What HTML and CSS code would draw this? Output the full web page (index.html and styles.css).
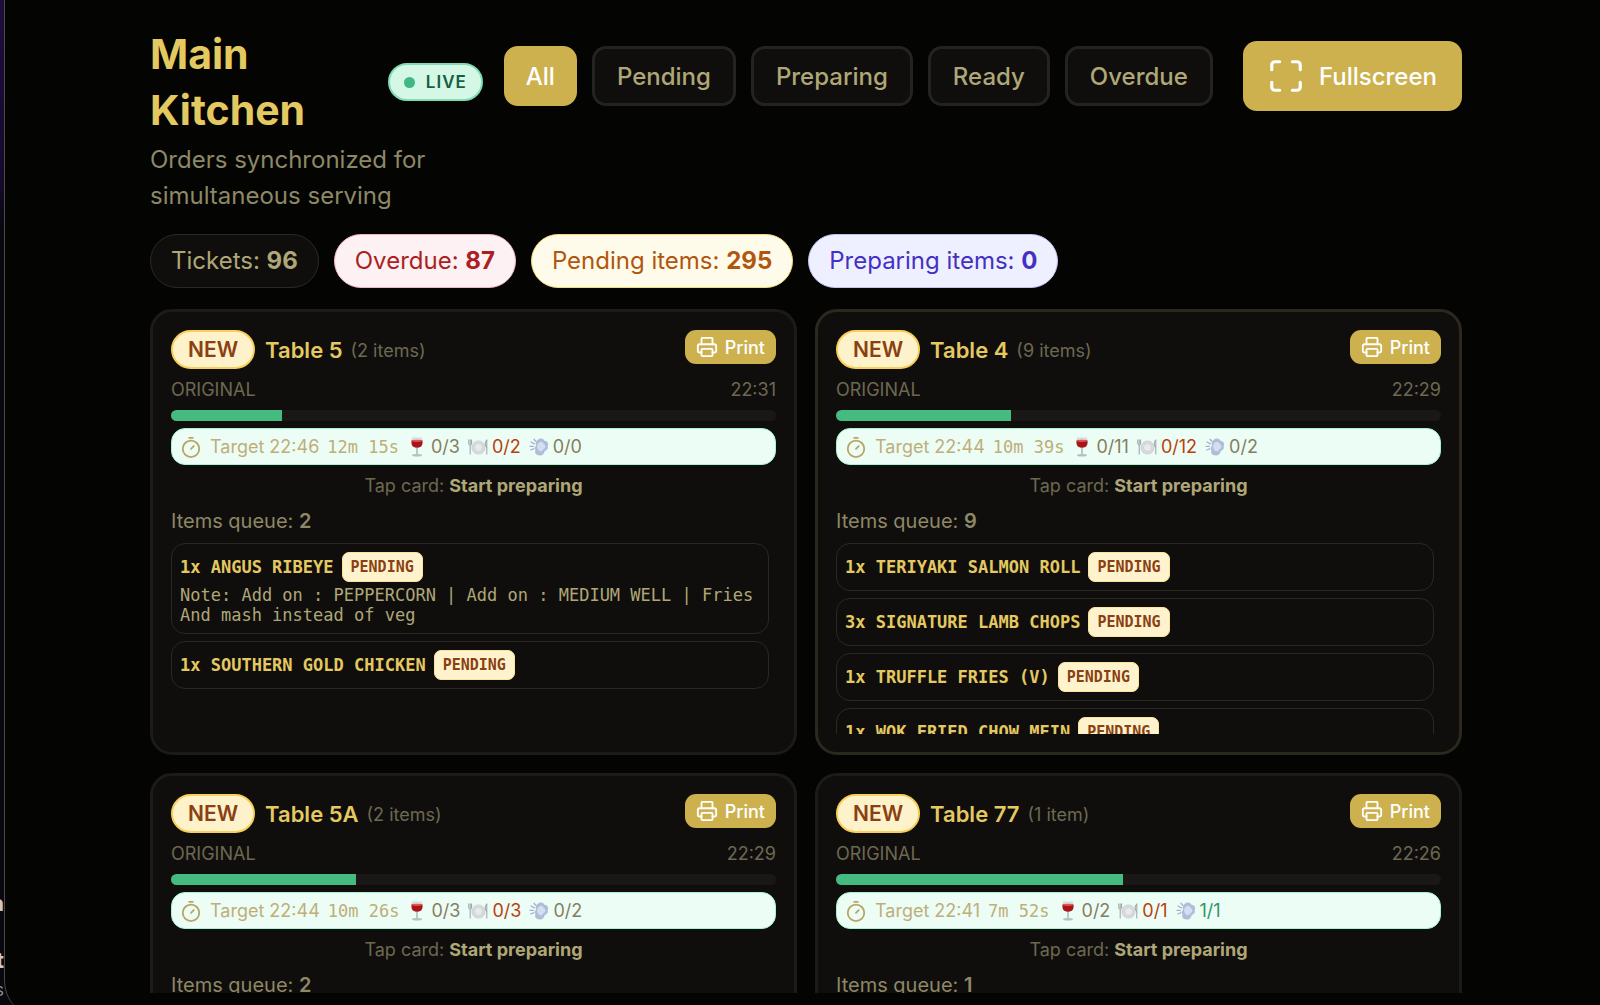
FILE: index.html
```html
<!DOCTYPE html>
<html lang="en">
<head>
  <meta charset="UTF-8">
  <meta name="viewport" content="width=device-width, initial-scale=1.0">
  <title>Main Kitchen | Order display</title>
  <link rel="stylesheet" href="styles.css">
</head>
<body>
  <!-- Shared icons -->
  <svg class="sprite" aria-hidden="true">
    <symbol id="icon-expand" viewBox="0 0 24 24">
      <path d="M8 3H5a2 2 0 0 0-2 2v3M21 8V5a2 2 0 0 0-2-2h-3M3 16v3a2 2 0 0 0 2 2h3M16 21h3a2 2 0 0 0 2-2v-3"/>
    </symbol>
    <symbol id="icon-print" viewBox="0 0 24 24">
      <path d="M6 18H4a2 2 0 0 1-2-2v-5a2 2 0 0 1 2-2h16a2 2 0 0 1 2 2v5a2 2 0 0 1-2 2h-2"/>
      <path d="M6 9V3a1 1 0 0 1 1-1h10a1 1 0 0 1 1 1v6"/>
      <rect x="6" y="14" width="12" height="8" rx="1"/>
    </symbol>
    <symbol id="icon-timer" viewBox="0 0 24 24">
      <path d="M10 2h4M12 14l3-3"/>
      <circle cx="12" cy="14" r="9"/>
    </symbol>
    <symbol id="icon-wine" viewBox="0 0 20 20">
      <path d="M5 .5h10c.8 5 1 10-5 10.500C4 10.500 4.200 5.500 5 .5z" fill="#d3dcdd"/>
      <path d="M4.600 3.500h10.800c.6 4-.4 7-5.400 7.300-5-.3-6-3.300-5.400-7.300z" fill="#a8141a"/>
      <ellipse cx="10" cy="3.800" rx="5.400" ry="1.100" fill="#e2564e"/>
      <path d="M9.400 11h1.200v7H9.400z" fill="#9aa7ab"/>
      <ellipse cx="10" cy="18.300" rx="5" ry="1.200" fill="#b4c0c3"/>
    </symbol>
    <symbol id="icon-plate" viewBox="0 0 20 20">
      <circle cx="10.500" cy="10.500" r="6.600" fill="#d9dcde" stroke="#bfc4c7" stroke-width=".6"/>
      <circle cx="10.500" cy="10.500" r="4" fill="#e8eaeb" stroke="#c3c8cb" stroke-width=".6"/>
      <path d="M.8 2.500v4.500M2.200 2.500v4.500M3.600 2.500v4.500M.8 7c0 1.500 2.800 1.500 2.800 0M2.200 8v9.500M18.800 2.500v15M18.600 3c-1.800 2-1.800 5.500 0 7.500" fill="none" stroke="#98a1a6" stroke-width="1"/>
    </symbol>
    <symbol id="icon-dash" viewBox="0 0 20 20">
      <path d="M8.500 3c2-2.500 6-2 7 .8 3 .2 4.500 3 3.200 5.500.6 2.800-1.200 4.500-3 4.700-.5 3.500-3.500 5.500-6.200 4.200-2.700-.2-4-2.500-3-4.700-1.500-1.500-1.200-3.700.7-4.500C6.200 6.800 6.800 4.300 8.500 3z" fill="#aebdd8"/>
      <path d="M10 5.500c2-1.800 4.700-.5 4.700 1.700 2.300.6 2.300 4 0 4.600-.8 2.700-4.200 3.400-5.200 1.200C7.500 11 8 7 10 5.500z" fill="#d5def0"/>
      <path d="M2 5l3.500 1.800M1 9.300h3.500M1.800 13l2.700-1.200M5 2.200l1.800 2" stroke="#9fb3d3" stroke-width="1.300" stroke-linecap="round" fill="none"/>
    </symbol>
  </svg>

  <div class="desktop" aria-hidden="true">
    <span class="peek peek-bold">a</span>
    <span class="peek peek-bold">t</span>
    <span class="peek">s</span>
  </div>

  <div class="window">
    <main class="kitchen">
      <header class="header">
        <div class="heading">
          <div class="heading-row">
            <h1>Main Kitchen</h1>
            <span class="live"><span class="live-dot"></span>LIVE</span>
          </div>
          <p>Orders synchronized for simultaneous serving</p>
        </div>
        <div class="actions">
          <nav class="filters">
            <button type="button" class="filter active">All</button>
            <button type="button" class="filter">Pending</button>
            <button type="button" class="filter">Preparing</button>
            <button type="button" class="filter">Ready</button>
            <button type="button" class="filter">Overdue</button>
          </nav>
          <button type="button" class="fullscreen">
            <svg class="line-icon"><use href="#icon-expand"/></svg>
            Fullscreen
          </button>
        </div>
      </header>

      <div class="stats">
        <span class="stat">Tickets: <b>96</b></span>
        <span class="stat stat-overdue">Overdue: <b>87</b></span>
        <span class="stat stat-pending">Pending items: <b>295</b></span>
        <span class="stat stat-preparing">Preparing items: <b>0</b></span>
      </div>

      <section class="tickets">
        <article class="ticket">
          <div class="ticket-head">
            <span class="badge-new">NEW</span>
            <h2>Table 5</h2>
            <span class="count">(2 items)</span>
            <button type="button" class="print"><svg class="line-icon"><use href="#icon-print"/></svg>Print</button>
          </div>
          <div class="ticket-meta"><span>ORIGINAL</span><time>22:31</time></div>
          <div class="progress"><div class="progress-fill" style="width: 18.3%"></div></div>
          <div class="target">
            <svg class="line-icon"><use href="#icon-timer"/></svg>
            <span class="target-time">Target 22:46</span>
            <span class="countdown">12m 15s</span>
            <span class="tally"><svg><use href="#icon-wine"/></svg>0/3</span>
            <span class="tally late"><svg><use href="#icon-plate"/></svg>0/2</span>
            <span class="tally"><svg><use href="#icon-dash"/></svg>0/0</span>
          </div>
          <p class="hint">Tap card: <b>Start preparing</b></p>
          <p class="queue">Items queue: <b>2</b></p>
          <ul class="items">
            <li>
              <div class="item-row"><span class="item-name">1x ANGUS RIBEYE</span><span class="status">PENDING</span></div>
              <p class="note">Note: Add on : PEPPERCORN | Add on : MEDIUM WELL | Fries And mash instead of veg</p>
            </li>
            <li>
              <div class="item-row"><span class="item-name">1x SOUTHERN GOLD CHICKEN</span><span class="status">PENDING</span></div>
            </li>
          </ul>
        </article>

        <article class="ticket selected">
          <div class="ticket-head">
            <span class="badge-new">NEW</span>
            <h2>Table 4</h2>
            <span class="count">(9 items)</span>
            <button type="button" class="print"><svg class="line-icon"><use href="#icon-print"/></svg>Print</button>
          </div>
          <div class="ticket-meta"><span>ORIGINAL</span><time>22:29</time></div>
          <div class="progress"><div class="progress-fill" style="width: 29%"></div></div>
          <div class="target">
            <svg class="line-icon"><use href="#icon-timer"/></svg>
            <span class="target-time">Target 22:44</span>
            <span class="countdown">10m 39s</span>
            <span class="tally"><svg><use href="#icon-wine"/></svg>0/11</span>
            <span class="tally late"><svg><use href="#icon-plate"/></svg>0/12</span>
            <span class="tally"><svg><use href="#icon-dash"/></svg>0/2</span>
          </div>
          <p class="hint">Tap card: <b>Start preparing</b></p>
          <p class="queue">Items queue: <b>9</b></p>
          <ul class="items">
            <li>
              <div class="item-row"><span class="item-name">1x TERIYAKI SALMON ROLL</span><span class="status">PENDING</span></div>
            </li>
            <li>
              <div class="item-row"><span class="item-name">3x SIGNATURE LAMB CHOPS</span><span class="status">PENDING</span></div>
            </li>
            <li>
              <div class="item-row"><span class="item-name">1x TRUFFLE FRIES (V)</span><span class="status">PENDING</span></div>
            </li>
            <li>
              <div class="item-row"><span class="item-name">1x WOK FRIED CHOW MEIN</span><span class="status">PENDING</span></div>
            </li>
          </ul>
        </article>

        <article class="ticket">
          <div class="ticket-head">
            <span class="badge-new">NEW</span>
            <h2>Table 5A</h2>
            <span class="count">(2 items)</span>
            <button type="button" class="print"><svg class="line-icon"><use href="#icon-print"/></svg>Print</button>
          </div>
          <div class="ticket-meta"><span>ORIGINAL</span><time>22:29</time></div>
          <div class="progress"><div class="progress-fill" style="width: 30.5%"></div></div>
          <div class="target">
            <svg class="line-icon"><use href="#icon-timer"/></svg>
            <span class="target-time">Target 22:44</span>
            <span class="countdown">10m 26s</span>
            <span class="tally"><svg><use href="#icon-wine"/></svg>0/3</span>
            <span class="tally late"><svg><use href="#icon-plate"/></svg>0/3</span>
            <span class="tally"><svg><use href="#icon-dash"/></svg>0/2</span>
          </div>
          <p class="hint">Tap card: <b>Start preparing</b></p>
          <p class="queue">Items queue: <b>2</b></p>
          <ul class="items"></ul>
        </article>

        <article class="ticket">
          <div class="ticket-head">
            <span class="badge-new">NEW</span>
            <h2>Table 77</h2>
            <span class="count">(1 item)</span>
            <button type="button" class="print"><svg class="line-icon"><use href="#icon-print"/></svg>Print</button>
          </div>
          <div class="ticket-meta"><span>ORIGINAL</span><time>22:26</time></div>
          <div class="progress"><div class="progress-fill" style="width: 47.5%"></div></div>
          <div class="target">
            <svg class="line-icon"><use href="#icon-timer"/></svg>
            <span class="target-time">Target 22:41</span>
            <span class="countdown">7m 52s</span>
            <span class="tally"><svg><use href="#icon-wine"/></svg>0/2</span>
            <span class="tally late"><svg><use href="#icon-plate"/></svg>0/1</span>
            <span class="tally done"><svg><use href="#icon-dash"/></svg>1/1</span>
          </div>
          <p class="hint">Tap card: <b>Start preparing</b></p>
          <p class="queue">Items queue: <b>1</b></p>
          <ul class="items"></ul>
        </article>
      </section>
    </main>
  </div>
</body>
</html>
```

FILE: styles.css
```css
* {
  margin: 0;
  padding: 0;
  box-sizing: border-box;
}

:root {
  --bg: #040402;
  --card: #100e0c;
  --line: #25231f;
  --gold: #cdb14f;
  --gold-text: #e4c961;
  --sand: #afa777;
  --muted: #8d8866;
  --dim: #6d6851;
}

body {
  display: flex;
  height: 100vh;
  overflow: hidden;
  background-color: #08070d;
  color: var(--sand);
  font-family: Inter, 'Liberation Sans', sans-serif;
  font-size: 18px;
}

button {
  font-family: inherit;
  font-weight: 500;
  border: none;
  cursor: pointer;
}

.sprite {
  display: none;
}

.line-icon {
  fill: none;
  stroke: currentColor;
  stroke-width: 2;
  stroke-linecap: round;
  stroke-linejoin: round;
}

/* sliver of the desktop behind the window */
.desktop {
  width: 4px;
  flex: none;
  display: flex;
  flex-direction: column;
  align-items: flex-end;
  justify-content: flex-end;
  overflow: hidden;
  background: linear-gradient(#1d0d3c 0, #150a2c 180px, #08070d 230px);
}

.peek {
  font-size: 17px;
  line-height: 30px;
  color: #8b8b8b;
}

.peek-bold {
  font-size: 22px;
  font-weight: 700;
  color: #c8c8c8;
}

.peek:first-child {
  margin-bottom: 27px;
}

.window {
  flex: 1;
  height: calc(100vh + 12px);
  padding-left: 7px;
  overflow: hidden;
  background-color: var(--bg);
  border-left: 1px solid #4a4a4c;
  border-bottom-left-radius: 36px;
}

.kitchen {
  width: calc(100% - 276px);
  height: calc(100vh - 12px);
  margin: 0 auto;
  padding-top: 26px;
  overflow: hidden;
}

.header {
  display: flex;
  align-items: flex-start;
  gap: 21px;
}

.heading {
  flex: 1;
}

.heading-row {
  display: flex;
  align-items: center;
  justify-content: space-between;
  gap: 16px;
}

h1 {
  color: var(--gold-text);
  font-size: 41px;
  line-height: 56px;
}

.heading p {
  margin-top: 4px;
  color: var(--muted);
  font-size: 24px;
  line-height: 36px;
}

.live {
  display: flex;
  align-items: center;
  gap: 11px;
  height: 38px;
  padding: 0 14px;
  border: 2px solid #7fdcb4;
  border-radius: 19px;
  background-color: #d5f7e5;
  color: #14603f;
  font-size: 17px;
  font-weight: 600;
  letter-spacing: 1px;
}

.live-dot {
  width: 11px;
  height: 11px;
  border-radius: 50%;
  background-color: #3fb984;
}

.actions {
  display: flex;
  align-items: center;
  gap: 30px;
  padding-top: 15px;
}

.filters {
  display: flex;
  gap: 15px;
}

.filter {
  height: 60px;
  padding: 0 22px;
  border: 3px solid var(--line);
  border-radius: 14px;
  background-color: var(--card);
  color: var(--sand);
  font-size: 24px;
}

.filter.active {
  padding: 0 19px;
  border-color: var(--gold);
  background-color: var(--gold);
  color: #fff;
}

.fullscreen {
  display: flex;
  align-items: center;
  gap: 14px;
  height: 70px;
  padding: 0 25px 0 24px;
  border-radius: 14px;
  background-color: var(--gold);
  color: #fff;
  font-size: 24px;
}

.fullscreen .line-icon {
  width: 38px;
  height: 38px;
}

.stats {
  display: flex;
  gap: 15px;
  margin-top: 20px;
}

.stat {
  height: 54px;
  padding: 0 20px;
  border: 1px solid #2b2925;
  border-radius: 27px;
  background-color: var(--card);
  font-size: 24px;
  line-height: 52px;
}

.stat-overdue {
  border-color: #f3b6c0;
  background-color: #fdf1f3;
  color: #ab1f22;
}

.stat-pending {
  border-color: #f0dc70;
  background-color: #fffbeb;
  color: #b1560f;
}

.stat-preparing {
  border-color: #c0c3f4;
  background-color: #eef0ff;
  color: #4530c4;
}

.tickets {
  display: grid;
  grid-template-columns: 1fr 1fr;
  gap: 18px;
  margin-top: 21px;
}

.ticket {
  display: flex;
  flex-direction: column;
  gap: 7px;
  min-width: 0;
  padding: 18px;
  border: 3px solid #1c1b19;
  border-radius: 22px;
  background-color: var(--card);
}

.ticket.selected {
  border-color: #2b291f;
}

.ticket-head {
  display: flex;
  align-items: center;
  height: 39px;
}

.badge-new {
  height: 39px;
  padding: 0 15px;
  border: 2px solid #f8cf58;
  border-radius: 20px;
  background-color: #fef2cb;
  color: #8a4013;
  font-size: 21px;
  font-weight: 600;
  line-height: 35px;
}

h2 {
  margin-left: 10px;
  color: var(--gold-text);
  font-size: 22px;
  font-weight: 600;
}

.count {
  margin-left: 8px;
  padding-top: 2px;
  color: var(--dim);
}

.print {
  display: flex;
  align-items: center;
  align-self: flex-start;
  gap: 7px;
  height: 34px;
  margin-left: auto;
  padding: 0 11px;
  border-radius: 11px;
  background-color: var(--gold);
  color: #fff;
  font-size: 18px;
}

.print .line-icon {
  width: 22px;
  height: 22px;
}

.ticket-meta {
  display: flex;
  justify-content: space-between;
  color: var(--dim);
  line-height: 27px;
}

.progress {
  height: 11px;
  border-radius: 6px;
  background-color: #1a1816;
  overflow: hidden;
}

.progress-fill {
  height: 100%;
  background-color: #45bb80;
}

.target {
  display: flex;
  align-items: center;
  gap: 8px;
  height: 37px;
  padding: 0 8px;
  border: 1px solid #a7f3d0;
  border-radius: 14px;
  background-color: #ecfdf5;
  color: #857d60;
}

.target .line-icon {
  width: 22px;
  height: 22px;
  color: #b9a565;
}

.target-time,
.countdown {
  color: #bfae78;
}

.countdown {
  font-family: 'DejaVu Sans Mono', 'Liberation Mono', monospace;
  font-size: 17px;
}

.tally {
  display: flex;
  align-items: center;
  gap: 4px;
}

.tally svg {
  width: 20px;
  height: 20px;
}

.late {
  color: #bb3f0e;
}

.done {
  color: #2f9468;
}

.hint {
  color: var(--dim);
  line-height: 27px;
  text-align: center;
}

.hint b {
  color: var(--sand);
}

.queue {
  color: var(--muted);
  font-size: 20px;
  line-height: 30px;
}

.queue b {
  font-weight: 600;
}

.items {
  display: flex;
  flex-direction: column;
  gap: 7px;
  height: 191px;
  padding-right: 7px;
  overflow: hidden;
  list-style: none;
  font-family: 'DejaVu Sans Mono', 'Liberation Mono', monospace;
  font-size: 17px;
}

.items li {
  flex: none;
  padding: 8px;
  border: 1px solid #2a2823;
  border-radius: 14px;
}

.item-row {
  display: flex;
  align-items: center;
  gap: 8px;
}

.item-name {
  color: var(--gold-text);
  font-weight: 700;
}

.status {
  height: 30px;
  padding: 0 8px;
  border: 1px solid #fae59a;
  border-radius: 7px;
  background-color: #fef3cd;
  color: #8a4013;
  font-size: 15px;
  font-weight: 700;
  line-height: 28px;
}

.note {
  margin-top: 3px;
  color: var(--sand);
  line-height: 20px;
}
```
